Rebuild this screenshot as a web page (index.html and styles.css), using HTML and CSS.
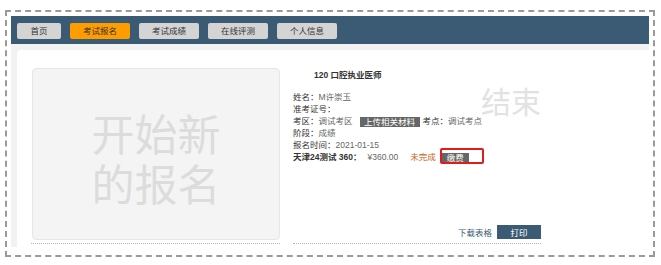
FILE: index.html
```html
<!DOCTYPE html>
<html lang="zh-CN">
<head>
    <meta charset="UTF-8">
    <meta name="viewport" content="width=device-width, initial-scale=1.0">
    <title>考试报名</title>
    <link rel="stylesheet" href="styles.css">
</head>
<body>
    <div class="frame">
        <div class="nav">
            <a class="nav-btn home">首页</a>
            <a class="nav-btn active">考试报名</a>
            <a class="nav-btn">考试成绩</a>
            <a class="nav-btn">在线评测</a>
            <a class="nav-btn">个人信息</a>
        </div>
        <div class="content">
            <div class="panel">
                <div class="col">
                    <div class="new-box">
                        <span class="new-text">开始新<br>的报名</span>
                    </div>
                </div>
                <div class="col col-info">
                    <div class="info">
                        <div class="title">120 口腔执业医师</div>
                        <div class="stamp">结束</div>
                        <p><span class="label">姓名：</span><span class="val">M许崇玉</span></p>
                        <p><span class="label">准考证号：</span></p>
                        <p><span class="label">考区：</span><span class="val">调试考区</span><span class="tag upload">上传相关材料</span><span class="label">考点：</span><span class="val">调试考点</span></p>
                        <p><span class="label">阶段：</span><span class="val">成绩</span></p>
                        <p><span class="label">报名时间：</span><span class="val">2021-01-15</span></p>
                        <p><strong>天津24测试 360：</strong><span class="val price">¥360.00</span><span class="status">未完成</span><span class="tag pay">缴费</span></p>
                    </div>
                    <div class="actions">
                        <a class="link">下载表格</a>
                        <button class="print">打印</button>
                    </div>
                </div>
            </div>
        </div>
    </div>
</body>
</html>
```

FILE: styles.css
```css
body {
    margin: 0;
    font-family: "Liberation Sans", "Noto Sans CJK SC", sans-serif;
    color: #333;
    background-color: #fff;
}
.frame {
    margin: 10px 6px 0 5px;
    height: 239px;
    border: 2px dashed #9a9a9a;
    padding: 4px 4px 0 4px;
}
.nav {
    display: flex;
    gap: 9px;
    height: 28px;
    padding: 7px 0 0 6px;
    box-sizing: border-box;
    background-color: #3b5a73;
}
.nav-btn {
    width: 60px;
    height: 16px;
    line-height: 16px;
    text-align: center;
    font-size: 8.5px;
    color: #333;
    background-color: #d4d4d4;
    border-radius: 2px;
}
.nav-btn.home {
    width: 44px;
}
.nav-btn.active {
    background-color: #ff9c00;
}
.content {
    background-color: #f2f2f2;
    padding: 6px 0 0 6px;
    height: 203px;
    box-sizing: border-box;
}
.panel {
    display: flex;
    gap: 13px;
    height: 100%;
    padding: 18px 0 0 14px;
    box-sizing: border-box;
    background-color: #fff;
    border-radius: 4px 0 0 0;
}
.col {
    width: 249px;
    height: 172px;
    padding-bottom: 3px;
    border-bottom: 1px dotted #b5b5b5;
}
.new-box {
    margin-left: 1px;
    width: 248px;
    height: 172px;
    box-sizing: border-box;
    border: 1px solid #e6e6e6;
    border-radius: 4px;
    background-color: #f4f4f4;
    display: flex;
    align-items: center;
    justify-content: center;
    padding-top: 14px;
}
.new-text {
    font-family: "Liberation Sans", "Noto Sans CJK SC", sans-serif;
    font-size: 43px;
    line-height: 50px;
    color: #dcdcdc;
    text-align: center;
}
.col-info {
    width: 248px;
    display: flex;
    flex-direction: column;
    justify-content: space-between;
}
.info {
    position: relative;
    font-size: 8.5px;
}
.title {
    font-weight: bold;
    font-size: 8.5px;
    line-height: 14px;
    padding-left: 21px;
    margin-bottom: 9px;
}
.stamp {
    position: absolute;
    top: 18px;
    right: 0;
    font-size: 30px;
    line-height: 34px;
    color: #e2e2e2;
}
.info p {
    margin: 0;
    line-height: 12px;
    height: 12px;
    white-space: nowrap;
}
.label {
    color: #333;
}
.val {
    color: #666;
}
.price {
    margin-left: 6px;
}
.status {
    color: #c8641e;
    margin-left: 12px;
}
.tag {
    display: inline-block;
    background-color: #666;
    color: #fff;
    font-size: 8.5px;
    line-height: 10px;
    height: 10px;
    vertical-align: -1px;
}
.tag.upload {
    padding: 0 4.5px;
    margin: 0 3px 0 7px;
}
.tag.pay {
    position: relative;
    padding: 0 5px;
    margin-left: 6px;
}
.tag.pay::after {
    content: "";
    position: absolute;
    left: -2px;
    top: -5px;
    width: 40px;
    height: 12px;
    border: 2px solid #e21b1b;
    border-radius: 2px;
}
.actions {
    display: flex;
    justify-content: flex-end;
    align-items: center;
    gap: 5px;
    margin-bottom: 1px;
}
.link {
    font-size: 8.5px;
    color: #3b5a73;
}
.print {
    width: 44px;
    height: 14px;
    padding: 0;
    border: none;
    font-family: "Noto Sans CJK SC", sans-serif;
    font-size: 8.5px;
    line-height: 14px;
    color: #fff;
    background-color: #3b5a73;
}
```
